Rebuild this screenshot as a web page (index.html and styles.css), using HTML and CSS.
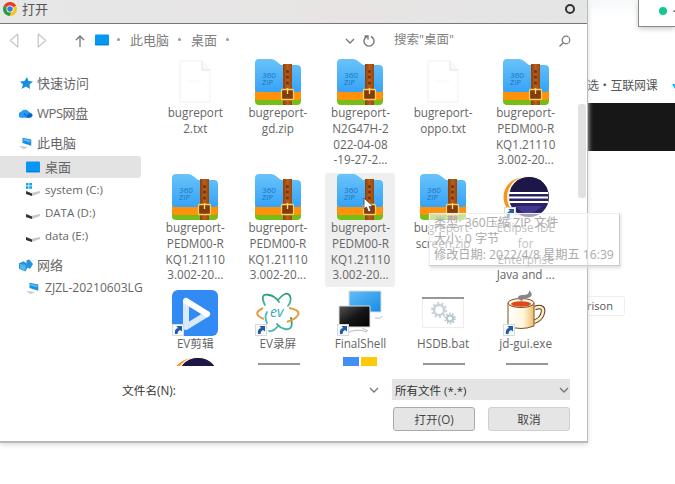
FILE: index.html
```html
<!DOCTYPE html>
<html lang="zh-CN">
<head>
<meta charset="utf-8">
<title>打开</title>
<link rel="stylesheet" href="styles.css">
</head>
<body>
<svg class="defs" aria-hidden="true">
  <defs>
    <linearGradient id="blue" x1="0" y1="0" x2="0" y2="1"><stop offset="0" stop-color="#69c3fa"/><stop offset="1" stop-color="#36a3f8"/></linearGradient>
    <linearGradient id="belt"><stop offset="0" stop-color="#8c4110"/><stop offset=".5" stop-color="#b95f16"/><stop offset="1" stop-color="#984710"/></linearGradient>
    <linearGradient id="screen" x1="0" y1="0" x2="1" y2="1"><stop offset="0" stop-color="#64bdf7"/><stop offset="1" stop-color="#168be4"/></linearGradient>
    <linearGradient id="night" x1="0" y1="0" x2="1" y2="1"><stop offset="0" stop-color="#555"/><stop offset=".5" stop-color="#161616"/><stop offset="1" stop-color="#000"/></linearGradient>
    <linearGradient id="orbit" x1="0" y1="0" x2="0" y2="1"><stop offset="0" stop-color="#219c69"/><stop offset="1" stop-color="#49bbb0"/></linearGradient>
    <linearGradient id="cup"><stop offset="0" stop-color="#fff"/><stop offset=".6" stop-color="#fff5d9"/><stop offset="1" stop-color="#edbe6c"/></linearGradient>
  </defs>
  <symbol id="zip" viewBox="0 0 46 46">
    <path d="M0 31h46v11q0 4-4 4H4q-4 0-4-4z" fill="#74be16"/>
    <path d="M0 29h46v9q0 3-3 3H3q-3 0-3-3z" fill="#ff910b"/>
    <path d="M0 4q0-4 4-4h12q3 0 5 2l5 4h16q4 0 4 4v20q0 3-3 3H3q-3 0-3-3z" fill="url(#blue)"/>
    <path d="M28 5h9v41h-9z" fill="url(#belt)"/>
    <g fill="#75310d"><circle cx="32.500" cy="12.500" r="1.500"/><circle cx="32.500" cy="18" r="1.500"/><circle cx="32.500" cy="24" r="1.500"/></g>
    <rect x="26.500" y="30.500" width="12" height="10" rx="1" fill="#823c0d" stroke="#ffd060" stroke-width="1.300"/>
    <path d="M32.500 29v6" stroke="#ffd769" stroke-width="1.400"/>
    <text x="7" y="19" font-size="6.500" textLength="14" lengthAdjust="spacingAndGlyphs" class="ziptext">360</text><text x="7" y="25.500" font-size="7.500" textLength="11" lengthAdjust="spacingAndGlyphs" class="ziptext">ZIP</text>
  </symbol>
  <symbol id="paper" viewBox="0 0 32 43"><path d="M1 1h22l8 9v32H1z" fill="#fff" stroke="#f1f1f1"/><path d="M23 1v9h8" fill="#fafafa" stroke="#e2e2e2"/><path d="M8 21h15" stroke="#f6f6f6"/></symbol>
  <symbol id="link" viewBox="0 0 12 12"><rect x=".5" y=".5" width="11" height="11" fill="#f8fafc" stroke="#d5dae0"/><path d="M3 10q-1-5 3-6L4.500 2H10v5.500L8 6Q5.500 7 5.500 10z" fill="#235ba4"/></symbol>
  <symbol id="eclipse" viewBox="0 0 46 46">
    <circle cx="20" cy="23" r="19.500" fill="#f7941e"/><circle cx="25" cy="23" r="21" fill="#fff2d9"/><circle cx="26" cy="23" r="20" fill="#2a2265"/><path d="M8 14Q14 3 26 3t18 11v4H8z" fill="#1c1746"/>
    <path d="M6 19h39M6 23.500h39M6 28h39" stroke="#fff" stroke-width="2"/><path d="M12 32q13 15 27 0z" fill="#42388f"/>
  </symbol>
  <symbol id="gears" viewBox="0 0 42 32">
    <rect x=".5" y=".5" width="41" height="30" fill="#fff" stroke="#ededed"/><path d="M0 1h42" stroke="#777" stroke-width="1.500"/>
    <g fill="none" stroke="#c9d3da"><circle cx="17" cy="13" r="5" stroke-width="2.500"/><circle cx="17" cy="13" r="7" stroke-width="2" stroke-dasharray="2.200 2.200"/><circle cx="28" cy="21.500" r="3" stroke-width="2" stroke="#b5c3cc"/><circle cx="28" cy="21.500" r="5" stroke-width="1.500" stroke-dasharray="1.600 1.540" stroke="#b5c3cc"/></g>
  </symbol>
  <symbol id="monitor" viewBox="0 0 14 12"><rect width="14" height="11" rx="1" y=".5" fill="#0796f2"/><path d="M0 10.500h14" stroke="#087fcf"/></symbol>
  <symbol id="pc" viewBox="0 0 16 14"><path d="m4 1 10 2v7L4 7z" fill="#198fdf"/><path d="m5 2 8 2v2L5 4z" fill="#5bc0fb"/><path d="m0 10 7 1 3 1-5 2z" fill="#cbcfd3"/></symbol>
  <symbol id="disk" viewBox="0 0 14 8"><path d="m0 3 5 2 9-2v2L6 8 0 6z" fill="#c7c7c7"/><path d="m0 3 6 2.500V8L0 6z" fill="#333"/></symbol>
  <symbol id="chevron" viewBox="0 0 10 6"><path d="m1 1 4 4 4-4" fill="none" stroke="#777" stroke-width="1.300"/></symbol>
</svg>

<main class="desktop">
  <aside class="page">
    <div class="page-head"><div class="bubble"><i class="online"></i><b>-</b></div></div>
    <div class="page-nav"><span>选・互联网课</span><svg width="8" height="10" viewBox="0 0 8 10"><path d="M0 4h3l3-4 2 2v6L3 9z" fill="#19b9ef"/></svg></div>
    <div class="page-banner"></div>
    <div class="page-button">rison</div>
  </aside>

  <section class="dialog">
    <header class="titlebar">
      <svg width="14" height="14" viewBox="0 0 28 28"><circle cx="14" cy="14" r="14" fill="#f9c51a"/><path d="M14 14 2 7a14 14 0 0 1 24 0z" fill="#e63b2e"/><path d="M2 7a14 14 0 0 0 11 21l5-12-6-1z" fill="#229e4a"/><circle cx="14" cy="14" r="7" fill="#fff"/><circle cx="14" cy="14" r="5.500" fill="#3979df"/></svg>
      <span>打开</span><i class="close"></i>
    </header>
    <nav class="toolbar">
      <svg class="back" width="10" height="15" viewBox="0 0 9 14"><path d="M8 1v12L1 7z" fill="none" stroke="#cacaca" stroke-width="1.300" stroke-linejoin="round"/></svg>
      <svg class="forward" width="10" height="15" viewBox="0 0 9 14"><path d="M1 1v12l7-6z" fill="none" stroke="#cacaca" stroke-width="1.300" stroke-linejoin="round"/></svg>
      <svg class="up" width="10" height="12" viewBox="0 0 10 12"><path d="M5 12V1M1 5l4-4 4 4" fill="none" stroke="#777" stroke-width="1.300"/></svg>
      <svg class="place" width="14" height="12"><use href="#monitor"/></svg>
      <i class="dot"></i><span class="crumb-pc">此电脑</span><i class="dot"></i><span class="crumb-desk">桌面</span><i class="dot"></i>
      <svg class="drop" width="10" height="6"><use href="#chevron"/></svg>
      <svg class="refresh" width="12" height="12" viewBox="0 0 12 12"><path d="M4 1.500A5 5 0 1 0 8 1.500M1.500 1H5v3.500" fill="none" stroke="#777" stroke-width="1.400"/></svg>
      <span class="search">搜索"桌面"</span>
      <svg class="lens" width="12" height="12" viewBox="0 0 12 12"><circle cx="7" cy="5" r="3.800" fill="none" stroke="#777" stroke-width="1.200"/><path d="m4.300 7.700-3.800 3.800" stroke="#777" stroke-width="1.300"/></svg>
    </nav>
    <div class="content">
      <div class="tree">
        <div class="root r1"><svg width="14" height="14" viewBox="0 0 14 14"><path d="m8 1 1.500 4 4.500.500-3.500 3L11 13l-4-2.500L2.500 13l1.500-4.500L1 5.500 5.500 5z" fill="#168fe0"/></svg><span>快速访问</span></div>
        <div class="root r2"><svg width="15" height="11" viewBox="0 0 15 11"><path d="M3 10a3 3 0 0 1-1-6 5 5 0 0 1 8-1 4 4 0 0 1 1 7z" fill="#2b98f4"/><path d="m5 6 4 4h3a2.500 2.500 0 1 0-2-4l-2 2-2-3z" fill="#0867cd"/></svg><span>WPS网盘</span></div>
        <div class="root r3"><svg width="15" height="14"><use href="#pc"/></svg><span>此电脑</span></div>
        <div class="leaf selected"><svg width="14" height="12"><use href="#monitor"/></svg><span class="cn">桌面</span></div>
        <div class="leaf"><svg width="14" height="13" viewBox="0 0 14 13"><path d="M0 0h2.500v2.500H0zm3.200 0H6v2.500H3.200zM0 3.200h2.500v2.500H0zm3.200 0H6v2.500H3.200z" fill="#10a6e8"/><use href="#disk" y="5" width="14" height="8"/></svg><span class="drive-c">system (C:)</span></div>
        <div class="leaf"><svg class="low" width="14" height="8"><use href="#disk"/></svg><span>DATA (D:)</span></div>
        <div class="leaf"><svg class="low" width="14" height="8"><use href="#disk"/></svg><span>data (E:)</span></div>
        <div class="root r4"><svg width="15" height="13" viewBox="0 0 15 13"><path d="m0 4 5-2 3 2V1l3-1 4 5-3 5-3-1-2 4-7-3z" fill="#2793dd"/><path d="m1 5 6 1v6l-6-2z" fill="#53b5f2"/></svg><span>网络</span></div>
        <div class="leaf"><svg width="15" height="14"><use href="#pc"/></svg><span class="host">ZJZL-20210603LG</span></div>
      </div>
      <div class="files">
        <div class="file"><svg class="doc" width="32" height="43"><use href="#paper"/></svg><p>bugreport<br>2.txt</p></div>
        <div class="file"><svg width="46" height="46"><use href="#zip"/></svg><p>bugreport-<br>gd.zip</p></div>
        <div class="file"><svg width="46" height="46"><use href="#zip"/></svg><p>bugreport-<br>N2G47H-2<br>022-04-08<br>-19-27-2...</p></div>
        <div class="file"><svg class="doc" width="32" height="43"><use href="#paper"/></svg><p>bugreport-<br>oppo.txt</p></div>
        <div class="file"><svg width="46" height="46"><use href="#zip"/></svg><p>bugreport-<br>PEDM00-R<br>KQ1.21110<br>3.002-20...</p></div>

        <div class="file"><svg width="46" height="46"><use href="#zip"/></svg><p>bugreport-<br>PEDM00-R<br>KQ1.21110<br>3.002-20...</p></div>
        <div class="file"><svg width="46" height="46"><use href="#zip"/></svg><p>bugreport-<br>PEDM00-R<br>KQ1.21110<br>3.002-20...</p></div>
        <div class="file hovered"><svg width="46" height="46"><use href="#zip"/></svg><p>bugreport-<br>PEDM00-R<br>KQ1.21110<br>3.002-20...</p>
          <svg class="pointer" width="11" height="16" viewBox="0 0 11 16"><path d="M1 1v11l2.500-2 2 5 2.500-1-2-4.500h4z" fill="#fff" stroke="#443b40" stroke-width=".8"/></svg></div>
        <div class="file"><svg width="46" height="46"><use href="#zip"/></svg><p>bugreport-<br>screen.zip</p></div>
        <div class="file"><svg width="46" height="46"><use href="#eclipse"/><use href="#link" y="33" x="1" width="12" height="12"/></svg><p>Eclipse IDE<br>for<br>Enterprise<br>Java and ...</p></div>

        <div class="file"><svg width="46" height="46" viewBox="0 0 46 46"><rect width="46" height="46" rx="6" fill="#328bf5"/><path d="M14 11v26l21-13z" fill="none" stroke="#d9eaff" stroke-width="6" stroke-linejoin="round"/><path d="m14 11 21 13" stroke="#fff" stroke-width="6" stroke-linecap="round"/><use href="#link" y="34" width="12" height="12"/></svg><p>EV剪辑</p></div>
        <div class="file"><svg width="46" height="46" viewBox="0 0 46 46"><g fill="none" stroke="url(#orbit)" stroke-width="1.800" stroke-linecap="round"><path d="M10 15Q4 3 14 5q6 1 10 7M24 9q8-9 11-3 2 5-2 10"/><path d="M36 28q3 13-6 11-5-1-8-5M22 37q-4 5-8 4"/><path d="M12 33q-3-6 0-11" stroke="#46b9c6"/></g><path d="M8 18q-12 6 1 11M34 18q16 3 5 11l-7 3" fill="none" stroke="#e79a3d" stroke-width="2"/><text x="15" y="27" font-size="14" class="evtext">ev</text><use href="#link" y="34" width="12" height="12"/></svg><p>EV录屏</p></div>
        <div class="file"><svg width="46" height="46" viewBox="0 0 46 46"><path d="M12 1h32v21H12z" fill="url(#screen)" stroke="#ddd"/><path d="M38 28q7 1 7-2M10 43q10-5 20-1M25 38l6 3" fill="none" stroke="#bbb"/><path d="M2 16h31v21H2z" fill="url(#night)" stroke="#ddd"/><use href="#link" y="34" width="12" height="12"/></svg><p>FinalShell</p></div>
        <div class="file"><svg width="46" height="46"><use href="#gears" x="2" y="7" width="42" height="32"/></svg><p>HSDB.bat</p></div>
        <div class="file"><svg width="46" height="46" viewBox="0 0 46 46"><path d="M32 18q9-3 8 4-1 7-9 10" fill="none" stroke="#5e351e" stroke-width="4.500"/><path d="M32 18q9-3 8 4-1 7-9 10" fill="none" stroke="#ffedc5" stroke-width="2.500"/><path d="M5 13v23q13 5 26 0V13z" fill="url(#cup)" stroke="#805025"/><ellipse cx="18" cy="13" rx="13" ry="4.500" fill="#fff7df" stroke="#805025"/><ellipse cx="18" cy="14" rx="10" ry="2.800" fill="#df4a1b"/><path d="M15 9q-1-4 5-4 7 0 6-5 6 6-1 8-5 0-6 3z" fill="#88858a"/><use href="#link" y="34" width="12" height="12"/></svg><p>jd-gui.exe</p></div>

        <div class="file"><svg width="46" height="46"><use href="#eclipse" y="-2"/></svg></div>
        <div class="file"><svg width="46" height="46"><use href="#gears" x="3" y="6" width="42" height="32"/></svg></div>
        <div class="file"><svg width="46" height="46" viewBox="0 0 46 46"><path d="M6 0h16v10H6z" fill="#428ff6"/><path d="M24 0h16v10H24z" fill="#ffca08"/></svg></div>
        <div class="file"><svg width="46" height="46"><use href="#gears" x="3" y="6" width="42" height="32"/></svg></div>
        <div class="file"><svg width="46" height="46"><use href="#gears" x="3" y="6" width="42" height="32"/></svg></div>
      </div>
      <div class="scroll"><i></i></div>
    </div>
    <footer class="footer">
      <label>文件名(N):</label>
      <div class="filename"><svg width="10" height="6"><use href="#chevron"/></svg></div>
      <div class="choices">
        <div class="filter"><span>所有文件 (*.*)</span><svg width="10" height="6"><use href="#chevron"/></svg></div>
        <div class="buttons"><button class="open">打开(O)</button><button>取消</button></div>
      </div>
    </footer>
  </section>
  <div class="tooltip"><span>类型: 360压缩 ZIP 文件</span><span>大小: 0 字节</span><span>修改日期: 2022/4/8 星期五 16:39</span></div>
</main>
</body>
</html>
```
FILE: styles.css
```css
* { box-sizing: border-box; }
body { margin: 0; overflow: hidden; font-family: "Open Sans", "Noto Sans CJK SC", sans-serif; font-size: 12px; color: #666; }
svg { display: block; flex: none; }
.defs { position: absolute; width: 0; height: 0; }
.desktop { position: relative; width: 675px; height: 484px; overflow: hidden; background: #fff; }
.page { margin-left: 587px; width: 88px; }
.page-head { height: 66px; display: flex; justify-content: flex-end; background: linear-gradient(#f6f8fa, #fff 18px); }
.bubble { width: 37px; height: 27px; padding: 0 0 5px 20px; display: flex; align-items: center; gap: 6px; overflow: hidden; background: #fff; border-left: 1px solid #888; border-bottom: 1px solid #888; box-shadow: 0 2px 5px #ccc; }
.online { flex: none; width: 8px; height: 8px; border-radius: 50%; background: #12ca91; }
.page-nav { height: 37px; display: flex; align-items: center; justify-content: space-between; overflow: hidden; white-space: nowrap; color: #555; letter-spacing: -.25px; }
.page-nav svg { margin-right: -5px; }
.page-banner { height: 48px; background: #171717; }
.page-button { width: 38px; height: 20px; margin-top: 145px; border: 1px solid #eee; border-left: 0; border-radius: 0 3px 3px 0; line-height: 18px; color: #555; font-size: 11px; }

.dialog { position: absolute; left: 0; top: 0; width: 588px; height: 443px; display: flex; flex-direction: column; background: #fff; border-right: 1px solid #bbb; border-bottom: 2px solid #b9b9b9; box-shadow: 0 2px 5px #ddd; }
.titlebar { height: 24px; flex: none; display: flex; align-items: center; gap: 5px; padding: 0 12px 5px 3px; border-bottom: 1px solid #777; background: linear-gradient(90deg, #e6e7e7, #e8e4e4 60%, #e4e5e5); font-size: 13px; line-height: 18px; color: #555; }
.titlebar span { margin-top: -1px; }
.close { width: 10px; height: 10px; margin-left: auto; border: 2px solid #333; border-radius: 50%; }
.toolbar { height: 32px; flex: none; display: flex; align-items: center; padding: 1px 16px 0 9px; font-size: 13px; line-height: 16px; color: #808080; white-space: nowrap; }
.toolbar span { margin-top: -2px; }
.toolbar .place, .toolbar .dot { margin-top: -2px; }
.forward { margin-left: 18px; }
.up { margin-left: 28px; }
.place { margin: 0 8px 0 10px; }
.dot { flex: none; width: 3px; height: 3px; border-radius: 50%; background: #999; }
.crumb-pc { width: 39px; margin: 0 9px 0 10px; }
.crumb-desk { width: 26px; margin: 0 9px 0 10px; }
.drop { margin-left: 116px; }
.refresh { margin: 0 19px 0 8px; }
.search { font-size: 12.500px; }
.lens { margin-left: auto; }

.content { height: 310px; flex: none; display: flex; overflow: hidden; }
.tree { width: 154px; flex: none; padding-top: 12px; white-space: nowrap; line-height: 16px; }
.root { height: 30px; display: flex; align-items: center; gap: 4px; padding-left: 19px; font-size: 13px; }
.root svg { width: 14px; }
.r2 { letter-spacing: -.45px; }
.r3 { padding-top: 2px; height: 28px; }
.r4 { height: 34px; padding-top: 2px; }
.leaf { width: 141px; height: 23px; display: flex; align-items: center; gap: 5px; padding-left: 26px; font-size: 11.500px; }
.leaf svg { width: 14px; }
.leaf .low { margin-top: 5px; }
.selected { height: 22px; background: #e3e3e3; border-radius: 0 3px 3px 0; }
.cn { font-size: 13px; margin-top: -1px; }
.leaf .host { font-size: 12.100px; }
.r4 + .leaf { height: 13px; }
.files { width: 413px; flex: none; display: grid; grid-template-columns: repeat(5, 82.600px); grid-template-rows: 115px 116px 67px 60px; padding-top: 2px; }
.file { position: relative; width: 70px; height: 114px; margin: 0 auto; padding-top: 1px; display: flex; flex-direction: column; align-items: center; }
.file p { margin: 0; font-size: 11.700px; line-height: 15.800px; text-align: center; white-space: nowrap; }
.doc { margin: 1px 0 2px; }
.hovered { background: #efefef; border-radius: 3px; }
.pointer { position: absolute; left: 38px; top: 24px; }
.ziptext { fill: #2375b5; font-family: "Open Sans", sans-serif; }
.evtext { fill: #38a9c6; font-family: "Open Sans", sans-serif; font-style: italic; }
.scroll { width: 20px; padding: 48px 0 0 11px; }
.scroll i { display: block; width: 8px; height: 94px; border-radius: 3px; background: #e1e1e1; }

.footer { flex: 1; display: flex; padding: 13px 17px 0 122px; color: #333; font-size: 11.700px; }
.footer label { width: 58px; padding-top: 2px; white-space: nowrap; }
.filename { width: 212px; height: 22px; display: flex; align-items: center; justify-content: flex-end; padding-right: 13px; }
.choices { width: 178px; }
.filter { height: 21px; display: flex; align-items: center; justify-content: space-between; padding: 0 1px 0 3px; background: #e4e4e4; font-size: 11.500px; }
.buttons { display: flex; justify-content: space-between; margin: 7px 0 0 1px; }
.buttons button { width: 82px; height: 24px; padding: 0 0 1px; border: 1px solid #d0d0d0; border-radius: 3px; background: #e5e5e5; color: #444; font: inherit; }
.buttons .open { border-color: #aaa; }
.tooltip { position: absolute; left: 429px; top: 213px; width: 191px; height: 53px; padding: 1px 4px; display: flex; flex-direction: column; border: 1px solid #eee; border-right-color: #ccc; border-bottom-color: #ccc; background: rgba(255,255,255,.58); box-shadow: 1px 2px 3px #ddd; color: #aaa; font-size: 12.200px; line-height: 16px; white-space: nowrap; }
```
